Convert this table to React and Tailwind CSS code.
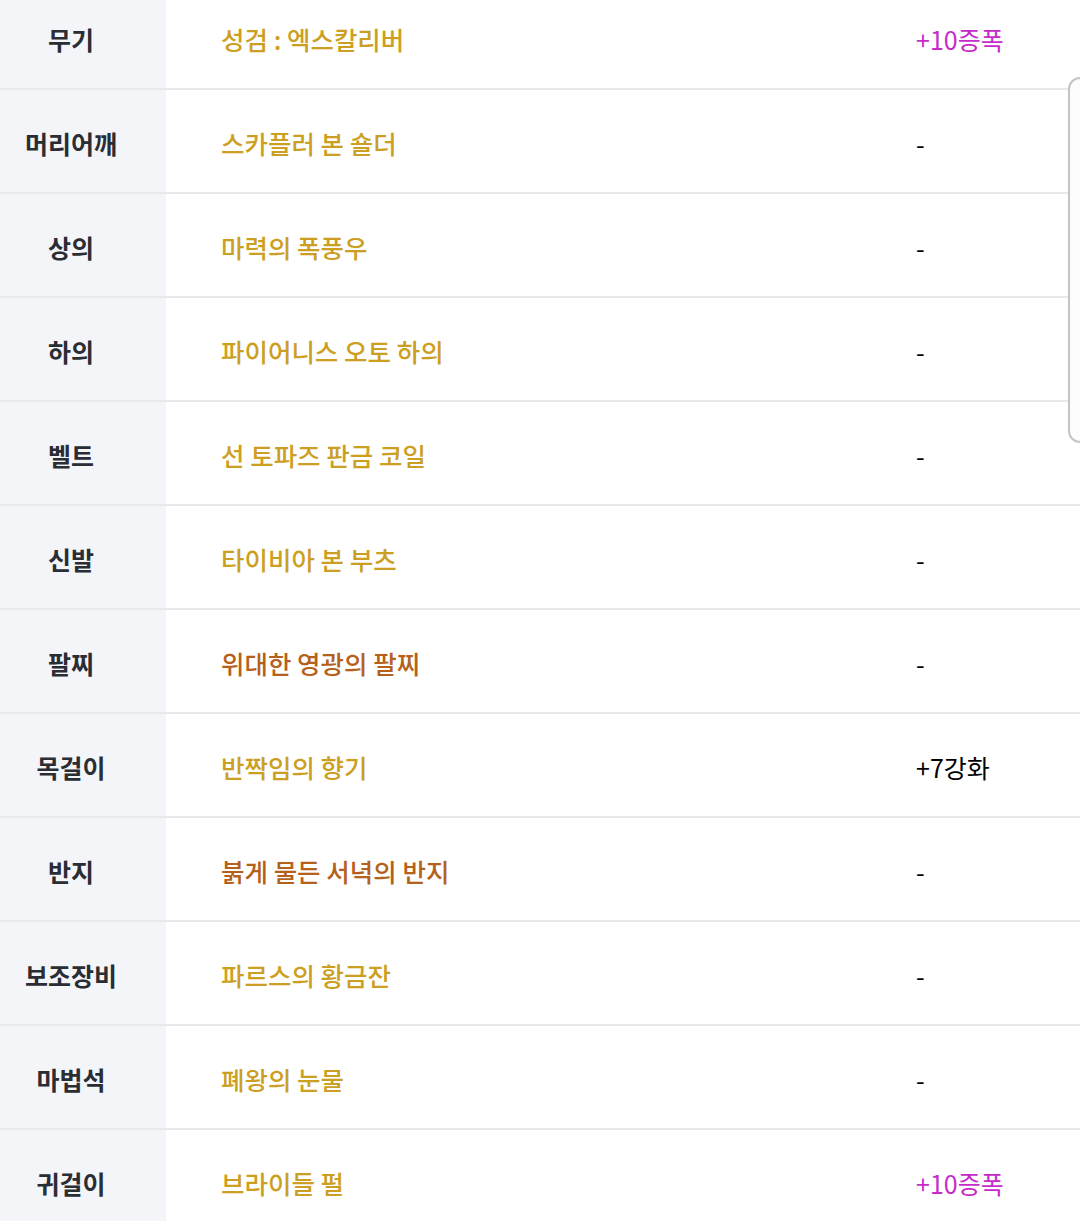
import React from 'react';

const GOLD = 'text-[#cc9f22]';
const RUST = 'text-[#b5611c]';

const rows = [
  { slot: '무기', name: '성검 : 엑스칼리버', color: GOLD, extra: '+10증폭', extraColor: 'text-[#c52bc9]' },
  { slot: '머리어깨', name: '스카플러 본 숄더', color: GOLD },
  { slot: '상의', name: '마력의 폭풍우', color: GOLD },
  { slot: '하의', name: '파이어니스 오토 하의', color: GOLD },
  { slot: '벨트', name: '선 토파즈 판금 코일', color: GOLD },
  { slot: '신발', name: '타이비아 본 부츠', color: GOLD },
  { slot: '팔찌', name: '위대한 영광의 팔찌', color: RUST },
  { slot: '목걸이', name: '반짝임의 향기', color: GOLD, extra: '+7강화', extraColor: 'text-black' },
  { slot: '반지', name: '붉게 물든 서녁의 반지', color: RUST },
  { slot: '보조장비', name: '파르스의 황금잔', color: GOLD },
  { slot: '마법석', name: '폐왕의 눈물', color: GOLD },
  { slot: '귀걸이', name: '브라이들 펄', color: GOLD, extra: '+10증폭', extraColor: 'text-[#c52bc9]' },
];

export default function App() {
  return (
    <div
      className="relative h-[1221px] w-full overflow-hidden bg-white"
      style={{ fontFamily: '"Noto Sans CJK KR", "Noto Sans", sans-serif' }}
    >
      <div className="-mt-[14px] flex flex-col">
        {rows.map((row) => (
          <div key={row.slot} className="flex h-[104px] border-b-2 border-[#e8e9ec]">
            <div className="flex w-[166px] shrink-0 items-center justify-center bg-[#f4f5f9] pr-[24px] pt-[5px] text-[25px] font-bold text-[#2a2d33]">
              {row.slot}
            </div>
            <div className={`flex flex-1 items-center pl-[55px] pt-[5px] text-[25.5px] font-medium ${row.color}`}>
              {row.name}
            </div>
            <div className={`flex w-[164px] shrink-0 items-center pt-[5px] text-[25px] ${row.extra ? row.extraColor : 'text-black'}`}>
              {row.extra || '-'}
            </div>
          </div>
        ))}
      </div>

      {/* scroll handle overlay */}
      <div className="absolute left-[1068px] top-[77px] h-[366px] w-[30px] rounded-[12px] border-2 border-[#c4c4c4] bg-[#fdfdfd]" />
    </div>
  );
}
